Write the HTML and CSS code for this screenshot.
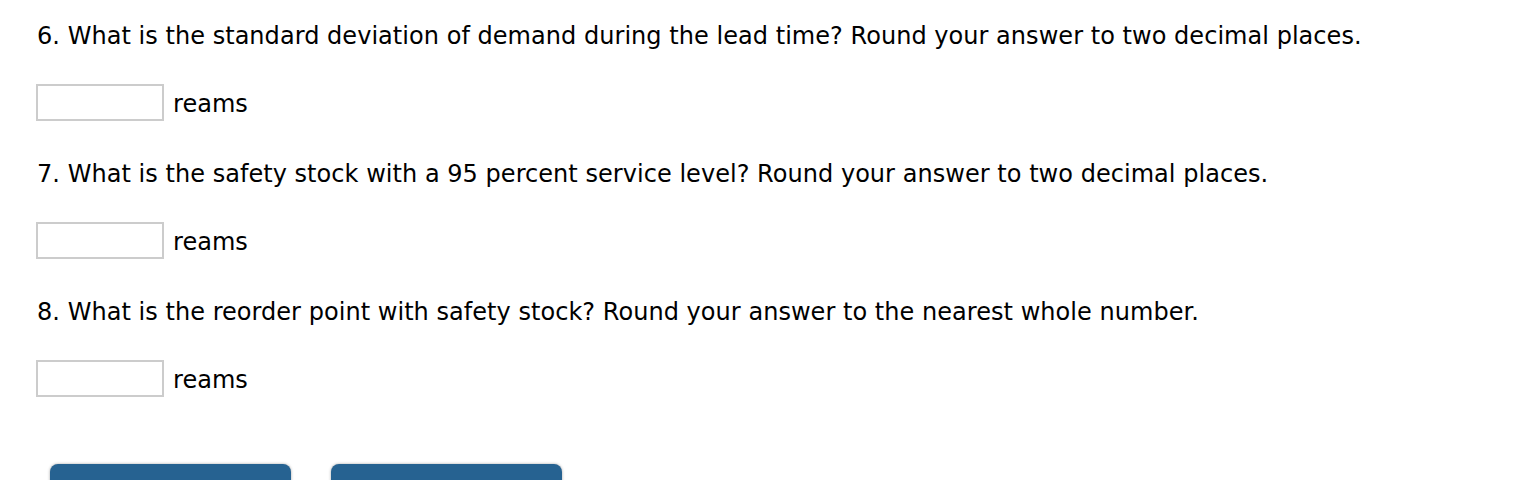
FILE: index.html
```html
<!DOCTYPE html>
<html>
<head>
<meta charset="utf-8">
<link rel="stylesheet" href="styles.css">
</head>
<body>
<div class="page">
  <div class="q">
    <p class="question">6. What is the standard deviation of demand during the lead time? Round your answer to two decimal places.</p>
    <div class="answer"><input class="box" type="text"><span class="unit">reams</span></div>
  </div>
  <div class="q">
    <p class="question">7. What is the safety stock with a 95 percent service level? Round your answer to two decimal places.</p>
    <div class="answer"><input class="box" type="text"><span class="unit">reams</span></div>
  </div>
  <div class="q">
    <p class="question">8. What is the reorder point with safety stock? Round your answer to the nearest whole number.</p>
    <div class="answer"><input class="box" type="text"><span class="unit">reams</span></div>
  </div>
  <div class="buttons">
    <div class="btn btn-a"></div>
    <div class="btn btn-b"></div>
  </div>
</div>
</body>
</html>
```
FILE: styles.css
```css
html, body {
  margin: 0;
  padding: 0;
  background: #fff;
  overflow: hidden;
}
.page {
  padding: 22px 0 0 37px;
  font-family: "DejaVu Sans", Verdana, sans-serif;
  font-size: 24px;
  letter-spacing: 0.04px;
  color: #000;
}
.q {
  display: flex;
  flex-direction: column;
  gap: 34px;
  margin-bottom: 39px;
}
.question {
  margin: 0;
  line-height: 28px;
}
.answer {
  display: flex;
  align-items: flex-start;
  gap: 9px;
  height: 37px;
  margin-left: -1px;
}
.box {
  width: 128px;
  height: 37px;
  box-sizing: border-box;
  border: 2px solid #ccc;
  margin: 0;
  padding: 0;
  background: #fff;
}
.unit {
  line-height: 41px;
}
.buttons {
  display: flex;
  gap: 40px;
  margin-top: 67px;
  padding-left: 13px;
}
.btn {
  height: 30px;
  background: #266291;
  border-radius: 8px 8px 0 0;
  box-shadow: 0 0 3px rgba(0,0,0,0.35);
}
.btn-a { width: 241px; }
.btn-b { width: 231px; }
```
